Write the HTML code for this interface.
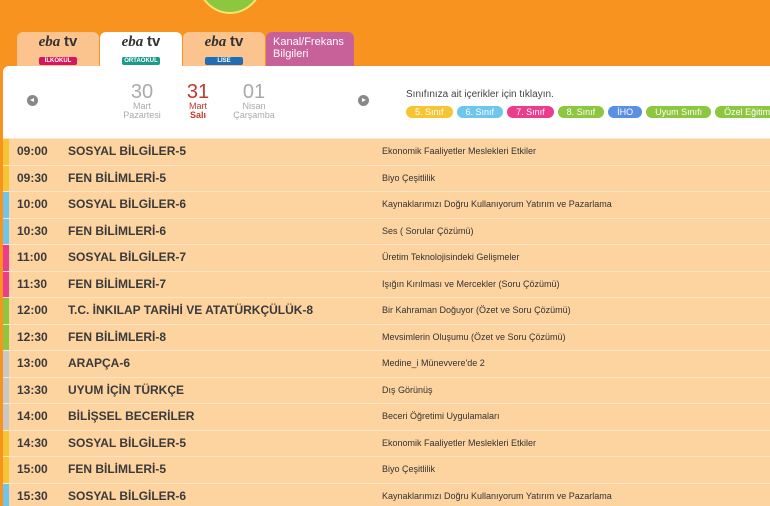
<!DOCTYPE html>
<html><head><meta charset="utf-8"><style>
*{margin:0;padding:0;box-sizing:border-box}
html,body{width:770px;height:506px;overflow:hidden}
body{background:#f7931e;font-family:"Liberation Sans",sans-serif;position:relative}
.circle{position:absolute;left:196px;top:-60px;width:68px;height:74px;border-radius:50%;background:#8dc63f;border:2px solid #f5e66a}
.tab{position:absolute;top:32px;height:35px;width:82px;border-radius:6px 6px 0 0;background:#fbc48e;text-align:center}
.tab .l{font-family:"Liberation Serif",serif;font-style:italic;font-weight:bold;font-size:15px;color:#333;margin-top:3px;line-height:14px}
.tab .l b{font-family:"Liberation Sans";font-style:normal}
.tab .s{display:inline-block;font-size:6px;color:#fff;font-weight:bold;width:38px;height:8px;line-height:8px;border-radius:2px;margin-top:2px}
.panel{position:absolute;left:3px;top:66px;width:767px;height:440px;background:#fff;border-radius:6px 0 0 0}
.arrow{position:absolute;width:11px;height:11px;border-radius:50%;background:#888}
.arrow:after{content:"";position:absolute;top:3px;width:0;height:0;border-top:2.5px solid transparent;border-bottom:2.5px solid transparent}
.al:after{left:3px;border-right:4px solid #fff}
.ar:after{left:4px;border-left:4px solid #fff}
.d{position:absolute;top:82px;text-align:center;color:#aaa;font-size:9px;line-height:9px}
.d .n{font-size:20px;line-height:20px;font-weight:300}
.pill{flex:none;height:12px;line-height:12px;border-radius:6px;color:#fff;font-size:9px;padding:0 9px;margin-right:4px;white-space:nowrap}
.pills{position:absolute;left:406px;top:106px;width:364px;height:16px;overflow:hidden;display:flex;align-items:flex-start}
.rows{position:absolute;left:3px;top:138px;width:767px;height:368px;overflow:hidden}
.r{height:26.5px;background:#fdd3a0;border-top:1px solid #fde6c8;position:relative;font-size:12px;color:#333;line-height:25px}
.r i{position:absolute;left:0;top:0;bottom:0;width:6px}
.r .t{position:absolute;left:14px;font-weight:bold;color:#3a3a3a}
.r .s{position:absolute;left:65px;font-weight:bold;color:#3a3a3a}
.r .p{position:absolute;left:379px;font-size:9px}
</style></head><body>
<div class="circle"></div>
<div class="tab" style="left:17px"><div class="l">eba <b>tv</b></div><span class="s" style="background:#d6175e">İLKOKUL</span></div>
<div class="tab" style="left:100px;background:#fff;height:36px"><div class="l">eba <b>tv</b></div><span class="s" style="background:#1b9a8a">ORTAOKUL</span></div>
<div class="tab" style="left:183px"><div class="l">eba <b>tv</b></div><span class="s" style="background:#1f6fb6">LİSE</span></div>
<div class="tab" style="left:266px;width:88px;background:#c8609a;text-align:left;color:#fff;font-size:11px;padding:4px 0 0 7px;line-height:12px">Kanal/Frekans<br>Bilgileri</div>
<div class="panel"></div>
<div class="arrow al" style="left:27px;top:95px"></div>
<div class="arrow ar" style="left:358px;top:95px"></div>
<div class="d" style="left:116px;width:52px"><div class="n">30</div>Mart<br>Pazartesi</div>
<div class="d" style="left:184px;width:28px;color:#c0392b"><div class="n">31</div>Mart<br><b>Salı</b></div>
<div class="d" style="left:228px;width:52px"><div class="n">01</div>Nisan<br>Çarşamba</div>
<div style="position:absolute;left:406px;top:89px;font-size:10px;color:#444">Sınıfınıza ait içerikler için tıklayın.</div>
<div class="pills">
<span class="pill" style="background:#f7c531">5. Sınıf</span><span class="pill" style="background:#6ec6ee">6. Sınıf</span><span class="pill" style="background:#ec3c8e">7. Sınıf</span><span class="pill" style="background:#8dc63f">8. Sınıf</span><span class="pill" style="background:#5b8fe6">İHO</span><span class="pill" style="background:#8dc63f">Uyum Sınıfı</span><span class="pill" style="background:#8dc63f">Özel Eğitim</span></div>
<div class="rows">
<div class="r"><i style="background:#f7c531"></i><span class="t">09:00</span><span class="s">SOSYAL BİLGİLER-5</span><span class="p">Ekonomik Faaliyetler Meslekleri Etkiler</span></div>
<div class="r"><i style="background:#f7c531"></i><span class="t">09:30</span><span class="s">FEN BİLİMLERİ-5</span><span class="p">Biyo Çeşitlilik</span></div>
<div class="r"><i style="background:#6ec6ee"></i><span class="t">10:00</span><span class="s">SOSYAL BİLGİLER-6</span><span class="p">Kaynaklarımızı Doğru Kullanıyorum Yatırım ve Pazarlama</span></div>
<div class="r"><i style="background:#6ec6ee"></i><span class="t">10:30</span><span class="s">FEN BİLİMLERİ-6</span><span class="p">Ses ( Sorular Çözümü)</span></div>
<div class="r"><i style="background:#ec3c8e"></i><span class="t">11:00</span><span class="s">SOSYAL BİLGİLER-7</span><span class="p">Üretim Teknolojisindeki Gelişmeler</span></div>
<div class="r"><i style="background:#ec3c8e"></i><span class="t">11:30</span><span class="s">FEN BİLİMLERİ-7</span><span class="p">Işığın Kırılması ve Mercekler (Soru Çözümü)</span></div>
<div class="r"><i style="background:#8dc63f"></i><span class="t">12:00</span><span class="s">T.C. İNKILAP TARİHİ VE ATATÜRKÇÜLÜK-8</span><span class="p">Bir Kahraman Doğuyor (Özet ve Soru Çözümü)</span></div>
<div class="r"><i style="background:#8dc63f"></i><span class="t">12:30</span><span class="s">FEN BİLİMLERİ-8</span><span class="p">Mevsimlerin Oluşumu (Özet ve Soru Çözümü)</span></div>
<div class="r"><i style="background:#c8c8c8"></i><span class="t">13:00</span><span class="s">ARAPÇA-6</span><span class="p">Medine_i Münevvere'de 2</span></div>
<div class="r"><i style="background:#c8c8c8"></i><span class="t">13:30</span><span class="s">UYUM İÇİN TÜRKÇE</span><span class="p">Dış Görünüş</span></div>
<div class="r"><i style="background:#c8c8c8"></i><span class="t">14:00</span><span class="s">BİLİŞSEL BECERİLER</span><span class="p">Beceri Öğretimi Uygulamaları</span></div>
<div class="r"><i style="background:#f7c531"></i><span class="t">14:30</span><span class="s">SOSYAL BİLGİLER-5</span><span class="p">Ekonomik Faaliyetler Meslekleri Etkiler</span></div>
<div class="r"><i style="background:#f7c531"></i><span class="t">15:00</span><span class="s">FEN BİLİMLERİ-5</span><span class="p">Biyo Çeşitlilik</span></div>
<div class="r"><i style="background:#6ec6ee"></i><span class="t">15:30</span><span class="s">SOSYAL BİLGİLER-6</span><span class="p">Kaynaklarımızı Doğru Kullanıyorum Yatırım ve Pazarlama</span></div>
</div>
</body></html>
